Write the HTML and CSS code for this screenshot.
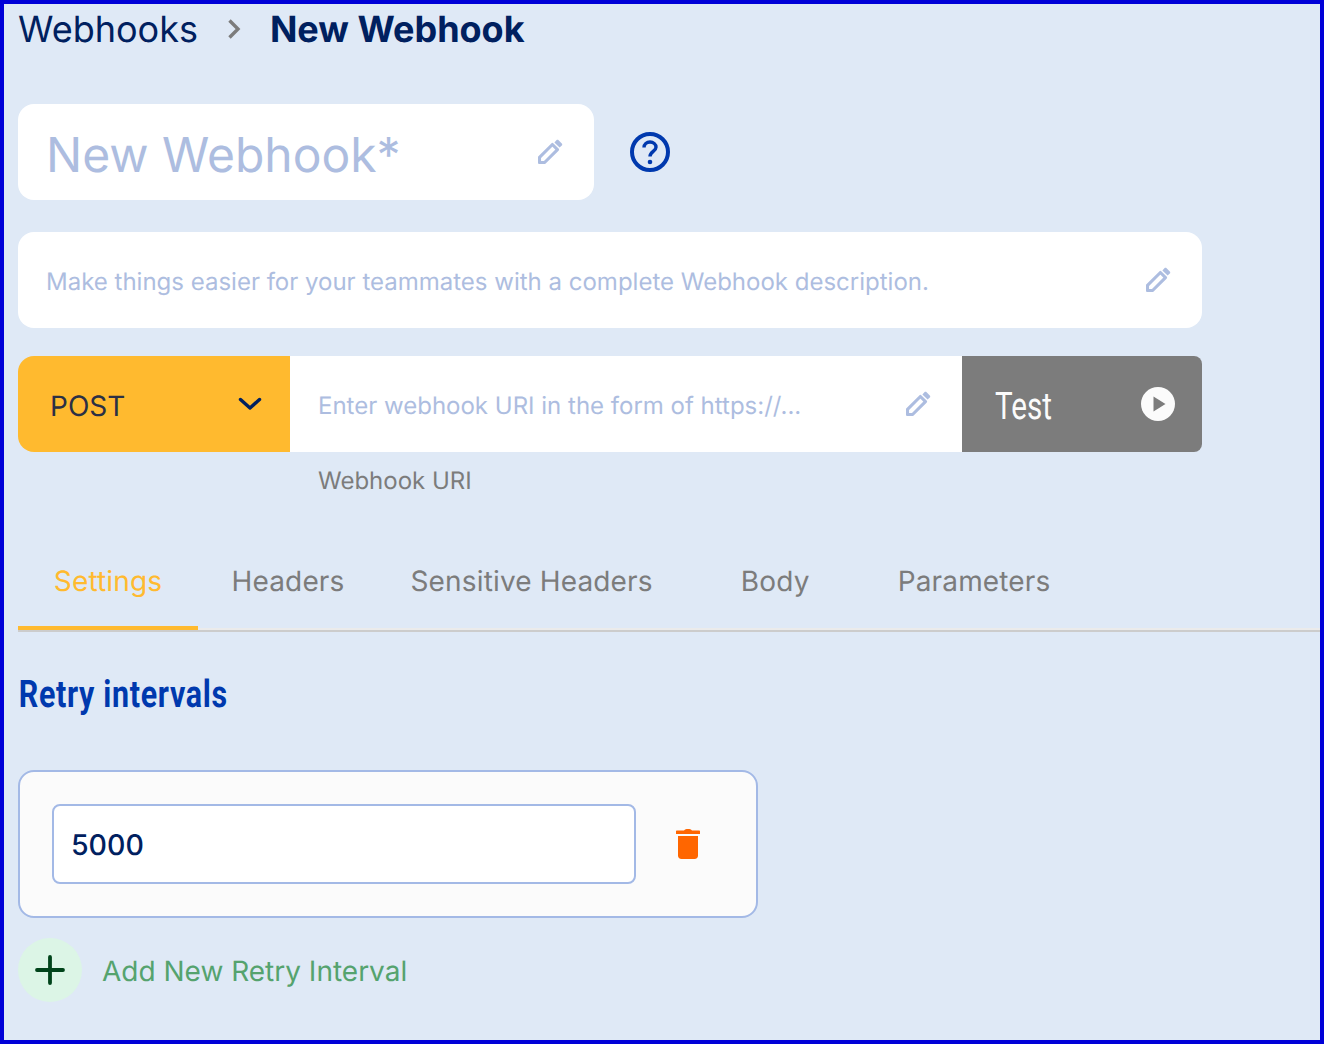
FILE: index.html
```html
<!DOCTYPE html>
<html lang="en">
<head>
<meta charset="utf-8">
<title>New Webhook</title>
<link rel="stylesheet" href="styles.css">
</head>
<body>
<svg class="defs" width="0" height="0" aria-hidden="true">
  <symbol id="pencil" viewBox="0 0 25 25">
    <path d="M1.5 23.5V18.4L14.4 5.5L19.5 10.6L6.6 23.5Z" fill="none" stroke="currentColor" stroke-width="3.1" stroke-linejoin="round"/>
    <path d="M16.4 3.4L18.4 1.2C19 .6 20 .6 20.6 1.2L23.8 4.4C24.4 5 24.4 6 23.8 6.6L21.6 8.6Z" fill="currentColor"/>
  </symbol>
</svg>
<main class="page">
  <nav class="crumbs">
    <span class="crumb">Webhooks</span>
    <svg class="crumb-sep" viewBox="0 0 14 22"><path d="M2.5 2.5L11 11L2.5 19.5" fill="none" stroke="currentColor" stroke-width="3.4"/></svg>
    <span class="crumb crumb-current">New Webhook</span>
  </nav>

  <div class="title-row">
    <div class="card title-card">
      <span class="title-text">New Webhook*</span>
      <svg class="pencil"><use href="#pencil"/></svg>
    </div>
    <svg class="help" viewBox="0 0 40 40">
      <circle cx="20" cy="20" r="18" fill="none" stroke="currentColor" stroke-width="4"/>
      <path d="M14 15.6C14 12.2 16.8 10 20 10C23.2 10 26 12.2 26 15.2C26 19.4 20 19.6 20 24.6" fill="none" stroke="currentColor" stroke-width="3.4"/>
      <circle cx="20" cy="30" r="2.3" fill="currentColor"/>
    </svg>
  </div>

  <div class="card desc-card">
    <span class="desc-text">Make things easier for your teammates with a complete Webhook description.</span>
    <svg class="pencil"><use href="#pencil"/></svg>
  </div>

  <div class="uri-row">
    <div class="method">
      <span class="method-name">POST</span>
      <svg class="chevron" viewBox="0 0 24 14"><path d="M2.5 2.5L12 11L21.5 2.5" fill="none" stroke="currentColor" stroke-width="3.4" stroke-linecap="round" stroke-linejoin="round"/></svg>
    </div>
    <div class="uri-field">
      <span class="uri-text">Enter webhook URI in the form of https://...</span>
      <svg class="pencil"><use href="#pencil"/></svg>
    </div>
    <div class="test">
      <span class="test-label">Test</span>
      <svg class="play" viewBox="0 0 34 34"><circle cx="17" cy="17" r="17" fill="#fbfbfb"/><path d="M12.5 9.5L24.5 17L12.5 24.5Z" fill="#7c7c7c"/></svg>
    </div>
  </div>
  <div class="uri-label">Webhook URI</div>

  <div class="tabs">
    <div class="tab tab-active">Settings</div>
    <div class="tab">Headers</div>
    <div class="tab">Sensitive Headers</div>
    <div class="tab">Body</div>
    <div class="tab">Parameters</div>
  </div>

  <h2 class="section-title"><span class="section-title-inner">Retry intervals</span></h2>

  <div class="interval-card">
    <div class="interval-input">5000</div>
    <svg class="trash" viewBox="0 0 24 30">
      <path d="M8 1.6C9 .4 10.2 0 12 0C13.8 0 15 .4 16 1.6H23C23.6 1.6 24 2 24 2.6V5H0V2.6C0 2 .4 1.6 1 1.6Z" fill="currentColor"/>
      <path d="M2 7H22V26.6C22 28.6 20.6 30 18.6 30H5.4C3.4 30 2 28.6 2 26.6Z" fill="currentColor"/>
    </svg>
  </div>

  <div class="add-row">
    <span class="add-btn">
      <svg class="plus" viewBox="0 0 30 30"><path d="M15 2V28M2 15H28" fill="none" stroke="currentColor" stroke-width="3.8" stroke-linecap="round"/></svg>
    </span>
    <span class="add-text">Add New Retry Interval</span>
  </div>
</main>
</body>
</html>
```
FILE: styles.css
```css
* { box-sizing: border-box; }
html, body { margin: 0; height: 100%; }
body {
  background: #dfe9f6;
  border: 4px solid #0000d8;
  font-family: Inter, "Liberation Sans", sans-serif;
  text-rendering: geometricPrecision;
  overflow: hidden;
}
.defs { position: absolute; }
.page { padding: 0 0 0 14px; display: flex; flex-direction: column; }

.crumbs { display: flex; align-items: center; height: 50px; color: #00205f; }
.crumb { font-size: 36px; }
.crumb-current { font-weight: 700; }
.crumb-sep { width: 14px; height: 22px; color: #7c7c7c; margin: 0 29px 0 29px; }

.title-row { display: flex; align-items: center; margin-top: 50px; }
.card { background: #fff; border-radius: 16px; display: flex; align-items: center; height: 96px; }
.title-card { width: 576px; padding: 0 31px 0 28px; justify-content: space-between; }
.title-text { font-size: 48px; color: #adbde0; position: relative; top: 2px; }
.pencil { width: 25px; height: 25px; color: #adbde0; flex: none; position: relative; top: -1px; }
.help { width: 40px; height: 40px; color: #0039ae; margin-left: 36px; }

.desc-card { width: 1184px; margin-top: 32px; padding: 0 31px 0 28px; justify-content: space-between; }
.desc-text { font-size: 24px; color: #adbde0; position: relative; top: 1px; }

.uri-row { display: flex; width: 1184px; height: 96px; margin-top: 28px; }
.method {
  width: 272px; background: #ffba2f; border-radius: 16px 0 0 16px;
  display: flex; align-items: center; justify-content: space-between; padding: 0 28px 0 32px;
}
.method-name { font-size: 28px; color: #2b3045; position: relative; top: 2px; }
.chevron { width: 24px; height: 14px; color: #00205f; }
.uri-field {
  width: 672px; background: #fff; display: flex; align-items: center;
  justify-content: space-between; padding: 0 31px 0 28px;
}
.uri-text { font-size: 24px; color: #adbde0; position: relative; top: 1px; }
.test {
  width: 240px; background: #7c7c7c; border-radius: 0 8px 8px 0;
  display: flex; align-items: center; justify-content: space-between; padding: 0 27px 0 32.5px;
}
.test-label {
  display: inline-block; font-family: Roboto, sans-serif; font-size: 38px; color: #fbfbfb;
  transform: scaleX(0.78); transform-origin: left center; width: 57px; white-space: nowrap; position: relative; top: 3px;
}
.play { width: 34px; height: 34px; }
.uri-label { font-size: 24px; color: #7c7c7c; margin: 14px 0 0 300px; line-height: 30px; }

.tabs {
  display: flex; margin-top: 34px; height: 102px;
  border-bottom: 2px solid #cccccc; box-shadow: inset 0 -2px 0 #ebebeb;
}
.tab {
  min-width: 180px; padding: 2px 32.5px 0; height: 100px; font-size: 28px; letter-spacing: 0.15px; color: #7c7c7c;
  display: flex; align-items: center; justify-content: center; white-space: nowrap;
}
.tab-active { color: #ffba2f; box-shadow: inset 0 -4px 0 #ffba2f; }

.section-title { margin: 38px 0 0; height: 50px; line-height: 50px; font-weight: 700; color: #0039ae; }
.section-title-inner {
  display: inline-block; font-family: Roboto, sans-serif; font-size: 38px; font-weight: 700; letter-spacing: 0.85px; padding-left: 1px;
  transform: scaleX(0.8); transform-origin: left center; white-space: nowrap;
}

.interval-card {
  width: 740px; height: 148px; margin-top: 50px; background: #fbfbfb; border: 2px solid #a3b9e6;
  border-radius: 16px; display: flex; align-items: center; padding: 0 0 0 32px;
}
.interval-input {
  width: 584px; height: 80px; background: #fff; border: 2px solid #a3b9e6; border-radius: 8px;
  display: flex; align-items: center; padding-left: 17px; font-size: 28.5px; font-weight: 500; color: #00205f;
}
.trash { width: 24px; height: 30px; color: #ff6600; margin-left: 40px; flex: none; }

.add-row { display: flex; align-items: center; margin-top: 20px; }
.add-btn { width: 64px; height: 64px; border-radius: 50%; background: #dcf5e6; display: flex; align-items: center; justify-content: center; }
.plus { width: 30px; height: 30px; color: #00441a; }
.add-text { font-size: 28px; color: #55a36e; margin-left: 20px; position: relative; top: 1px; }
```
